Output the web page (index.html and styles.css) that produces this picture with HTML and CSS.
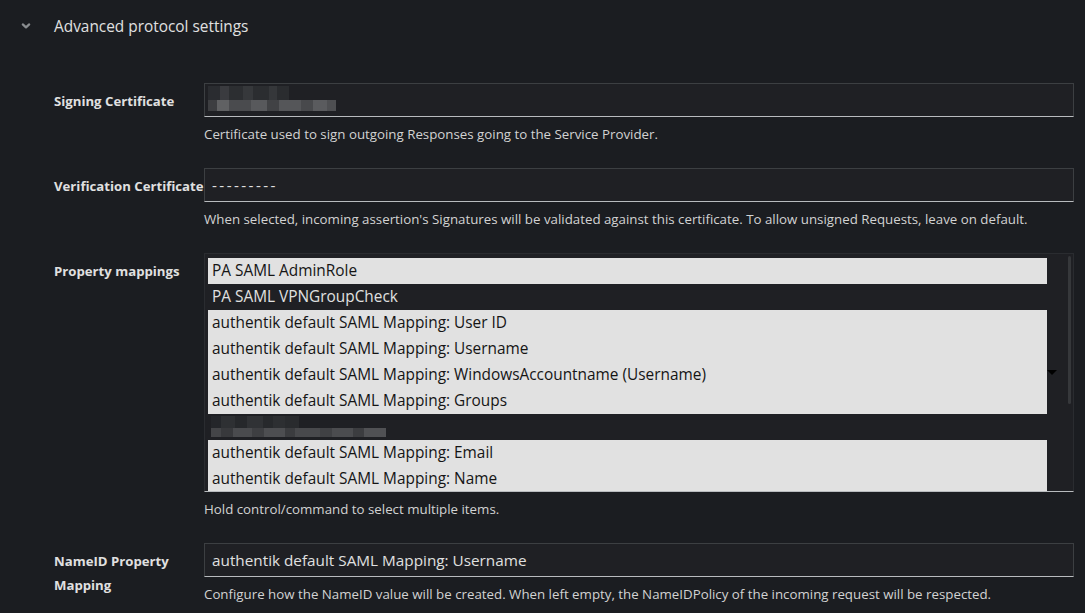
FILE: index.html
```html
<!DOCTYPE html>
<html>
<head>
<meta charset="utf-8">
<link rel="stylesheet" href="styles.css">
</head>
<body>
<div class="section-header">
  <span class="chevron"><svg width="12" height="12" viewBox="0 0 12 12"><path d="M2.8 4.4 L6 7.4 L9.2 4.4" fill="none" stroke="#8a8d90" stroke-width="2.2" stroke-linecap="round" stroke-linejoin="round"/></svg></span>
  <span class="section-title">Advanced protocol settings</span>
</div>
<div class="form">
  <div class="row">
    <div class="label">Signing Certificate</div>
    <div class="control">
      <div class="input">
        <div class="blur blur-sign">
          <span class="b" style="width:12px;background:#2a2c30"></span><span class="b" style="width:9px;background:#3a3b3f"></span><span class="b" style="width:14px;background:#2c2e31"></span><span class="b" style="width:10px;background:#36383b"></span><span class="b" style="width:16px;background:#2b2d30"></span><span class="b" style="width:8px;background:#35373a"></span><span class="b" style="width:12px;background:#2a2c2f"></span>
        </div>
        <div class="blur blur-sign2">
          <span class="b" style="width:9px;background:#3d3e41"></span><span class="b" style="width:12px;background:#606163"></span><span class="b" style="width:22px;background:#4a4b4e"></span><span class="b" style="width:16px;background:#58595c"></span><span class="b" style="width:12px;background:#414245"></span><span class="b" style="width:22px;background:#555659"></span><span class="b" style="width:12px;background:#48494c"></span><span class="b" style="width:14px;background:#5a5b5e"></span><span class="b" style="width:9px;background:#4e4f52"></span>
        </div>
      </div>
      <div class="help">Certificate used to sign outgoing Responses going to the Service Provider.</div>
    </div>
  </div>
  <div class="row">
    <div class="label nowrap">Verification Certificate</div>
    <div class="control">
      <div class="input"><span class="value dashes">---------</span></div>
      <div class="help">When selected, incoming assertion's Signatures will be validated against this certificate. To allow unsigned Requests, leave on default.</div>
    </div>
  </div>
  <div class="row">
    <div class="label">Property mappings</div>
    <div class="control">
      <div class="select">
        <div class="options">
          <div class="opt sel">PA SAML AdminRole</div>
          <div class="opt">PA SAML VPNGroupCheck</div>
          <div class="opt sel">authentik default SAML Mapping: User ID</div>
          <div class="opt sel">authentik default SAML Mapping: Username</div>
          <div class="opt sel">authentik default SAML Mapping: WindowsAccountname (Username)</div>
          <div class="opt sel">authentik default SAML Mapping: Groups</div>
          <div class="opt blurred">
            <div class="blur blur-opt">
              <span class="b" style="width:10px;background:#24262a"></span><span class="b" style="width:14px;background:#2e3033"></span><span class="b" style="width:12px;background:#26282b"></span><span class="b" style="width:16px;background:#303235"></span><span class="b" style="width:10px;background:#27292c"></span><span class="b" style="width:12px;background:#2d2f32"></span><span class="b" style="width:14px;background:#292b2e"></span>
            </div>
            <div class="blur blur-opt2">
              <span class="b" style="width:10px;background:#444548"></span><span class="b" style="width:12px;background:#38393c"></span><span class="b" style="width:19px;background:#4a4b4e"></span><span class="b" style="width:12px;background:#3e3f42"></span><span class="b" style="width:21px;background:#4d4e51"></span><span class="b" style="width:10px;background:#3b3c3f"></span><span class="b" style="width:25px;background:#48494c"></span><span class="b" style="width:12px;background:#404144"></span><span class="b" style="width:21px;background:#4b4c4f"></span><span class="b" style="width:11px;background:#3c3d40"></span><span class="b" style="width:22px;background:#505154"></span>
            </div>
          </div>
          <div class="opt sel">authentik default SAML Mapping: Email</div>
          <div class="opt sel">authentik default SAML Mapping: Name</div>
        </div>
        <span class="caret"></span>
        <span class="scroll-thumb"></span>
      </div>
      <div class="help">Hold control/command to select multiple items.</div>
    </div>
  </div>
  <div class="row">
    <div class="label">NameID Property Mapping</div>
    <div class="control">
      <div class="input"><span class="value">authentik default SAML Mapping: Username</span></div>
      <div class="help">Configure how the NameID value will be created. When left empty, the NameIDPolicy of the incoming request will be respected.</div>
    </div>
  </div>
</div>
</body>
</html>
```
FILE: styles.css
```css
html, body {
  margin: 0;
  padding: 0;
  background: #1b1d21;
  color: #e0e0e0;
  font-family: "Open Sans", "Noto Sans", sans-serif;
  overflow: hidden;
}
.section-header {
  display: flex;
  align-items: center;
  height: 52px;
}
.chevron {
  width: 54px;
  display: flex;
  justify-content: center;
  box-sizing: border-box;
}
.chevron svg { margin-left: -2px; }
.section-title {
  font-size: 15.4px;
  color: #e0e0e0;
}
.form {
  padding: 31px 11px 0 54px;
  display: flex;
  flex-direction: column;
  gap: 25px;
}
.row {
  display: grid;
  grid-template-columns: 150px 1fr;
}
.label {
  font-size: 13.2px;
  font-weight: 700;
  line-height: 24px;
  padding-top: 6px;
  color: #e0e0e0;
}
.label.nowrap { white-space: nowrap; }
.control { min-width: 0; }
.input {
  height: 34px;
  box-sizing: border-box;
  background: #1f2024;
  border: 1px solid #3c3f42;
  border-bottom-color: #b8bbbe;
  position: relative;
  display: flex;
  align-items: center;
  padding-left: 7px;
}
.value {
  font-size: 15.3px;
  color: #e0e0e0;
}
.value.dashes { letter-spacing: 2.4px; }
.help {
  font-size: 13.3px;
  line-height: 18px;
  height: 18px;
  margin-top: 8px;
  color: #d2d2d2;
  white-space: nowrap;
}
.blur {
  position: absolute;
  display: flex;
}
.blur .b { display: block; height: 100%; }
.blur-sign { left: 3px; top: 2px; height: 14px; }
.blur-sign2 { left: 3px; top: 16px; height: 11px; }
.select {
  position: relative;
  height: 239px;
  box-sizing: border-box;
  background: #1f2024;
  border: 1px solid #2a2c30;
  border-bottom: 1px solid #b8bbbe;
  padding: 4px 26px 0 3px;
  overflow: hidden;
}
.opt {
  height: 26px;
  line-height: 26px;
  padding-left: 4px;
  font-size: 15.4px;
  color: #e0e0e0;
  white-space: nowrap;
}
.opt.sel {
  background: #e1e1e1;
  color: #151515;
}
.opt.blurred { position: relative; }
.blur-opt { left: 3px; top: 2px; height: 12px; }
.blur-opt2 { left: 3px; top: 14px; height: 9px; }
.caret {
  position: absolute;
  right: 16px;
  top: 116px;
  width: 0;
  height: 0;
  border-left: 5px solid transparent;
  border-right: 5px solid transparent;
  border-top: 5px solid #000;
}
.scroll-thumb {
  position: absolute;
  right: 2px;
  top: 2px;
  width: 3px;
  height: 148px;
  background: #36383b;
  border-radius: 2px;
}
```
